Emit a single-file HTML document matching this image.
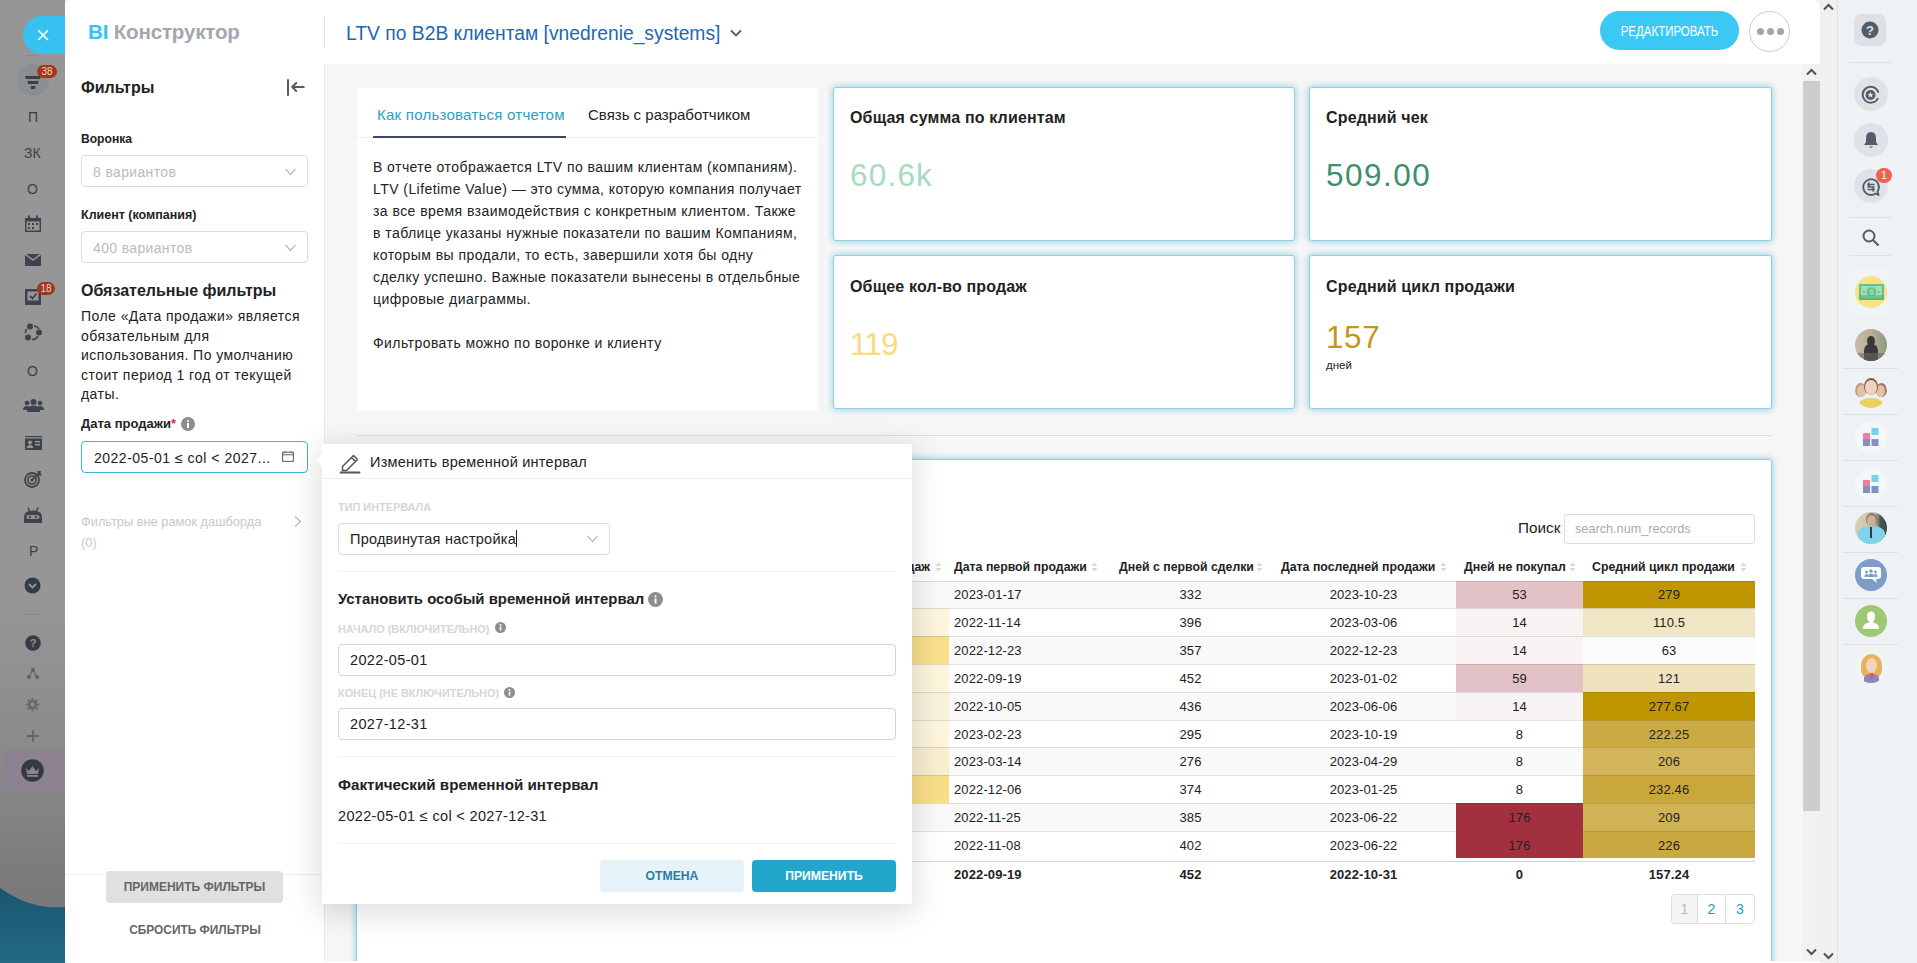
<!DOCTYPE html>
<html><head><meta charset="utf-8">
<style>
*{box-sizing:border-box;margin:0;padding:0}
html,body{width:1917px;height:963px;overflow:hidden}
body{position:relative;font-family:"Liberation Sans",sans-serif;background:#eef2f4;color:#222}
.a{position:absolute}
.t{position:absolute;white-space:nowrap;line-height:1}
</style></head><body>
<!-- LEFT SIDEBAR -->
<div class="a" id="lsb" style="left:0;top:0;width:65px;height:963px;background:linear-gradient(#969696 0px,#969696 600px,#8a8a8a 760px,#7b7b7b 880px,#777 963px);overflow:hidden">
  <div class="a" style="left:23px;top:16px;width:50px;height:38px;border-radius:19px 0 0 19px;background:#36c1f0"></div>
  <svg class="a" style="left:36px;top:28px" width="14" height="14" viewBox="0 0 14 14"><path d="M2.2 2.2L12 12M12 2.2L2.2 12" stroke="#fff" stroke-width="1.6"/></svg>
  <div class="a" style="left:25px;top:55px;width:14px;height:1px;background:#8a8a8a"></div>
  <div class="a" style="left:17px;top:64px;width:32px;height:32px;border-radius:50%;background:#8b8e92"></div>
  <svg class="a" style="left:24px;top:74px" width="18" height="16" viewBox="0 0 18 16"><path d="M1 2H17L16 5H2Z M3.3 7H14.7L13.7 10H4.3Z M6.6 12H11.4L10.9 15H7.1Z" fill="#3a4049"/></svg>
  <div class="a" style="left:37px;top:65px;width:20px;height:13px;border-radius:7px;background:#a5371a;color:#efd6cc;font-size:10px;line-height:13px;text-align:center">38</div>
  <div class="t" style="left:28px;top:110px;font-size:14px;color:#3b4048">П</div>
  <div class="t" style="left:24px;top:146px;font-size:14px;color:#3b4048">ЗК</div>
  <div class="t" style="left:27px;top:182px;font-size:14px;color:#3b4048">О</div>
  <svg class="a" style="left:24px;top:215px" width="18" height="17" viewBox="0 0 18 17"><path d="M1 3H17V17H1Z" fill="#3d434c"/><rect x="4" y="0.5" width="2" height="4" fill="#3d434c"/><rect x="12" y="0.5" width="2" height="4" fill="#3d434c"/><rect x="2.5" y="6.5" width="13" height="9" fill="#969696"/><g fill="#3d434c"><rect x="4" y="8" width="2" height="2"/><rect x="8" y="8" width="2" height="2"/><rect x="12" y="8" width="2" height="2"/><rect x="4" y="12" width="2" height="2"/><rect x="8" y="12" width="2" height="2"/></g></svg>
  <svg class="a" style="left:25px;top:254px" width="16" height="12" viewBox="0 0 16 12"><path d="M0 0H16V12H0Z" fill="#3d434c"/><path d="M0 0L8 6L16 0" stroke="#969696" stroke-width="1.5" fill="none"/></svg>
  <svg class="a" style="left:25px;top:288px" width="16" height="17" viewBox="0 0 16 17"><rect x="0" y="1" width="16" height="16" fill="#3d434c"/><rect x="2.5" y="3.5" width="11" height="9" fill="#969696"/><path d="M5 8L7.5 10.5L11.5 5.5" stroke="#3d434c" stroke-width="1.8" fill="none"/></svg>
  <div class="a" style="left:37px;top:282px;width:18px;height:13px;border-radius:7px;background:#9b3a18;color:#e8d0c8;font-size:10px;line-height:13px;text-align:center">18</div>
  <svg class="a" style="left:24px;top:323px" width="18" height="18" viewBox="0 0 18 18"><circle cx="6" cy="3.5" r="3" fill="#3d434c"/><circle cx="15" cy="9.5" r="3" fill="#3d434c"/><circle cx="4" cy="14.5" r="3" fill="#3d434c"/><path d="M10 3A7 7 0 0 1 15 6M14 13A7 7 0 0 1 8 16.5M1.5 10A7 7 0 0 1 2.5 6" stroke="#3d434c" stroke-width="1.6" fill="none"/></svg>
  <div class="t" style="left:27px;top:364px;font-size:14px;color:#3b4048">О</div>
  <svg class="a" style="left:23px;top:399px" width="21" height="13" viewBox="0 0 21 13"><g fill="#3d434c"><circle cx="10.5" cy="3" r="3"/><path d="M4 13Q4 6.5 10.5 6.5Q17 6.5 17 13Z"/><circle cx="4" cy="4" r="2.3"/><path d="M0 11Q0 7 4 7Q6 7 6.5 8L5 11Z"/><circle cx="17" cy="4" r="2.3"/><path d="M21 11Q21 7 17 7Q15 7 14.5 8L16 11Z"/></g></svg>
  <svg class="a" style="left:25px;top:436px" width="17" height="14" viewBox="0 0 17 14"><rect x="0" y="0" width="17" height="1.2" fill="#3d434c"/><rect x="0" y="2.5" width="17" height="11.5" fill="#3d434c"/><circle cx="5" cy="6.5" r="2" fill="#969696"/><path d="M2 12Q2 9 5 9Q8 9 8 12Z" fill="#969696"/><rect x="10" y="5" width="5" height="1.5" fill="#969696"/><rect x="10" y="8" width="5" height="1.5" fill="#969696"/></svg>
  <svg class="a" style="left:24px;top:471px" width="18" height="17" viewBox="0 0 18 17"><circle cx="8" cy="9" r="7" stroke="#3d434c" stroke-width="1.8" fill="none"/><circle cx="8" cy="9" r="4" stroke="#3d434c" stroke-width="1.6" fill="none"/><circle cx="8" cy="9" r="1.5" fill="#3d434c"/><path d="M8 9L15 2M13 1L16 0.5L15.5 4L17.5 3.5" stroke="#3d434c" stroke-width="1.6" fill="none"/></svg>
  <svg class="a" style="left:24px;top:507px" width="18" height="16" viewBox="0 0 18 16"><path d="M4 0.5L5.5 4M14 0.5L12.5 4" stroke="#3d434c" stroke-width="1.5"/><path d="M0 16V10Q0 3.5 9 3.5Q18 3.5 18 10V16Z" fill="#3d434c"/><rect x="2.5" y="8" width="13" height="4" rx="2" fill="#969696"/><circle cx="6" cy="10" r="1.2" fill="#3d434c"/><circle cx="12" cy="10" r="1.2" fill="#3d434c"/></svg>
  <div class="t" style="left:29px;top:544px;font-size:14px;color:#3b4048">Р</div>
  <svg class="a" style="left:24px;top:577px" width="17" height="17" viewBox="0 0 17 17"><circle cx="8.5" cy="8.5" r="8" fill="#353b45"/><path d="M5 7L8.5 10.5L12 7" stroke="#969696" stroke-width="1.8" fill="none"/></svg>
  <div class="a" style="left:23px;top:614px;width:19px;height:1px;background:#888"></div>
  <svg class="a" style="left:25px;top:635px" width="16" height="16" viewBox="0 0 16 16"><circle cx="8" cy="8" r="7.8" fill="#353b45"/><text x="8" y="12.3" font-size="11" font-weight="bold" text-anchor="middle" fill="#8f8f8f" font-family="Liberation Sans">?</text></svg>
  <svg class="a" style="left:27px;top:668px" width="12" height="11" viewBox="0 0 12 11"><g fill="#5d6269"><circle cx="6" cy="2" r="2"/><circle cx="2" cy="9" r="2"/><circle cx="10" cy="9" r="2"/></g><path d="M6 2L2 9M6 2L10 9" stroke="#5d6269" stroke-width="1.2"/></svg>
  <svg class="a" style="left:26px;top:698px" width="13" height="13" viewBox="0 0 13 13"><g fill="#686c72"><circle cx="6.5" cy="6.5" r="4.5"/><rect x="5.3" y="0" width="2.4" height="13"/><rect x="0" y="5.3" width="13" height="2.4"/><rect x="5.3" y="0" width="2.4" height="13" transform="rotate(45 6.5 6.5)"/><rect x="5.3" y="0" width="2.4" height="13" transform="rotate(-45 6.5 6.5)"/></g><circle cx="6.5" cy="6.5" r="2" fill="#8f8f8f"/></svg>
  <svg class="a" style="left:27px;top:730px" width="12" height="12" viewBox="0 0 12 12"><path d="M6 0V12M0 6H12" stroke="#606468" stroke-width="1.8"/></svg>
  <div class="a" style="left:3px;top:751px;width:62px;height:39px;background:#8c8290"></div>
  <svg class="a" style="left:21px;top:759px" width="23" height="23" viewBox="0 0 23 23"><circle cx="11.5" cy="11.5" r="11.3" fill="#343a44"/><path d="M5 9L8 12L11.5 7L15 12L18 9L17 15H6Z" fill="#8c8290"/><rect x="6" y="16" width="11" height="1.8" fill="#8c8290"/></svg>
  <svg class="a" style="left:0;top:860px" width="65" height="103" viewBox="0 0 65 103"><path d="M0 28Q20 42 40 46Q55 48 65 47V103H0Z" fill="url(#wg)"/><defs><linearGradient id="wg" x1="0" y1="0" x2="0" y2="1"><stop offset="0" stop-color="#1a5670"/><stop offset="1" stop-color="#236a85"/></linearGradient></defs></svg>
</div>
<!-- MAIN PANEL -->
<div class="a" id="main" style="left:65px;top:0;width:1755px;height:963px;background:#fff;border-radius:6px 6px 0 6px;overflow:hidden">
  <!-- header -->
  <div class="t" style="left:23px;top:22px;font-size:20.6px;font-weight:bold;letter-spacing:-0.2px"><span style="color:#2fc6f6">BI</span> <span style="color:#a3a8ae">Конструктор</span></div>
  <div class="a" style="left:259px;top:17px;width:1px;height:30px;background:#dfe3e7"></div>
  <div class="t" style="left:281px;top:24px;font-size:19.3px;color:#2067b0">LTV по B2B клиентам [vnedrenie_systems]</div>
  <svg class="a" style="left:665px;top:29px" width="12" height="9" viewBox="0 0 12 9"><path d="M1 1.5L6 6.5L11 1.5" stroke="#525c69" stroke-width="1.8" fill="none"/></svg>
  <div class="a" style="left:1535px;top:11px;width:139px;height:39px;border-radius:20px;background:#3bc8f5;color:#fff;font-size:14px;line-height:41px;text-align:center"><span style="display:inline-block;transform:scaleX(0.82)">РЕДАКТИРОВАТЬ</span></div>
  <div class="a" style="left:1684px;top:11px;width:41px;height:41px;border-radius:50%;border:1px solid #c6cbd2;background:#fff"></div>
  <div class="a" style="left:1692px;top:28px;width:7px;height:7px;border-radius:50%;background:#a1a6ad"></div>
  <div class="a" style="left:1702px;top:28px;width:7px;height:7px;border-radius:50%;background:#a1a6ad"></div>
  <div class="a" style="left:1712px;top:28px;width:7px;height:7px;border-radius:50%;background:#a1a6ad"></div>
  <!-- dashboard bg -->
  <div class="a" id="dash" style="left:260px;top:64px;width:1478px;height:897px;background:#f6f6f6;overflow:hidden">
<div class="a" style="left:32px;top:24px;width:461px;height:323px;background:#fff">
<div class="t" style="left:20px;top:19px;font-size:15px;letter-spacing:0.25px;color:#2aa0c6">Как пользоваться отчетом</div>
<div class="t" style="left:231px;top:19px;font-size:15px;color:#222">Связь с разработчиком</div>
<div class="a" style="left:0;top:49px;width:461px;height:1px;background:#eee"></div>
<div class="a" style="left:16px;top:48px;width:193px;height:2px;background:#3b4570"></div>
<div class="a" style="left:16px;top:68px;width:450px;font-size:14px;letter-spacing:0.44px;line-height:22px;color:#222">В отчете отображается LTV по вашим клиентам (компаниям).<br>LTV (Lifetime Value) — это сумма, которую компания получает<br>за все время взаимодействия с конкретным клиентом. Также<br>в таблице указаны нужные показатели по вашим Компаниям,<br>которым вы продали, то есть, завершили хотя бы одну<br>сделку успешно. Важные показатели вынесены в отдельбные<br>цифровые диаграммы.<br><br>Фильтровать можно по воронке и клиенту</div>
</div>
<div class="a" style="left:508px;top:23px;width:462px;height:154px;background:#fff;border:1px solid #8fd0e3;border-radius:3px;box-shadow:0 0 6px 1px rgba(100,190,222,0.6)">
<div class="t" style="left:16px;top:22px;font-size:16px;font-weight:bold;letter-spacing:0.15px;color:#222">Общая сумма по клиентам</div>
<div class="t" style="left:16px;top:72px;font-size:31.5px;letter-spacing:1.2px;color:#a6dbbf">60.6k</div>
</div>
<div class="a" style="left:984px;top:23px;width:463px;height:154px;background:#fff;border:1px solid #8fd0e3;border-radius:3px;box-shadow:0 0 6px 1px rgba(100,190,222,0.6)">
<div class="t" style="left:16px;top:22px;font-size:16px;font-weight:bold;letter-spacing:0.15px;color:#222">Средний чек</div>
<div class="t" style="left:16px;top:72px;font-size:31.5px;letter-spacing:1.5px;color:#3d8f6c">509.00</div>
</div>
<div class="a" style="left:508px;top:191px;width:462px;height:154px;background:#fff;border:1px solid #8fd0e3;border-radius:3px;box-shadow:0 0 6px 1px rgba(100,190,222,0.6)">
<div class="t" style="left:16px;top:23px;font-size:16px;font-weight:bold;letter-spacing:0.15px;color:#222">Общее кол-во продаж</div>
<div class="t" style="left:16px;top:73px;font-size:31.5px;letter-spacing:-0.9px;color:#fbd97c">119</div>
</div>
<div class="a" style="left:984px;top:191px;width:463px;height:154px;background:#fff;border:1px solid #8fd0e3;border-radius:3px;box-shadow:0 0 6px 1px rgba(100,190,222,0.6)">
<div class="t" style="left:16px;top:23px;font-size:16px;font-weight:bold;letter-spacing:0.15px;color:#222">Средний цикл продажи</div>
<div class="t" style="left:16px;top:66px;font-size:31.5px;letter-spacing:0.6px;color:#c09a16">157</div>
<div class="t" style="left:16px;top:104px;font-size:11.5px;color:#222">дней</div>
</div>
<div class="a" style="left:32px;top:371px;width:1414px;height:1px;background:#dcdcdc"></div>
<div class="a" style="left:31px;top:395px;width:1416px;height:520px;background:#fff;border:1px solid #8fd0e3;border-radius:3px;box-shadow:0 0 6px 1px rgba(100,190,222,0.6)"></div>
<div class="t" style="left:1193px;top:456px;font-size:15.3px;color:#222">Поиск</div>
<div class="a" style="left:1239px;top:450px;width:191px;height:30px;border:1px solid #ddd;border-radius:3px"></div>
<div class="t" style="left:1250px;top:459px;font-size:12.7px;color:#aaa">search.num_records</div>
<div class="t" style="left:505px;width:100px;text-align:right;top:497px;font-size:12.3px;font-weight:bold;color:#222">Кол-во продаж</div>
<svg class="a" style="left:610px;top:498px" width="7" height="10" viewBox="0 0 7 10"><path d="M0.5 4L3.5 0.5L6.5 4Z M0.5 6L3.5 9.5L6.5 6Z" fill="#d9d9d9"/></svg>
<div class="t" style="left:629px;top:497px;font-size:12.3px;font-weight:bold;color:#222">Дата первой продажи</div>
<svg class="a" style="left:766px;top:498px" width="7" height="10" viewBox="0 0 7 10"><path d="M0.5 4L3.5 0.5L6.5 4Z M0.5 6L3.5 9.5L6.5 6Z" fill="#d9d9d9"/></svg>
<div class="t" style="left:794px;top:497px;font-size:12.3px;font-weight:bold;color:#222">Дней с первой сделки</div>
<svg class="a" style="left:931px;top:498px" width="7" height="10" viewBox="0 0 7 10"><path d="M0.5 4L3.5 0.5L6.5 4Z M0.5 6L3.5 9.5L6.5 6Z" fill="#d9d9d9"/></svg>
<div class="t" style="left:956px;top:497px;font-size:12.3px;font-weight:bold;color:#222">Дата последней продажи</div>
<svg class="a" style="left:1115px;top:498px" width="7" height="10" viewBox="0 0 7 10"><path d="M0.5 4L3.5 0.5L6.5 4Z M0.5 6L3.5 9.5L6.5 6Z" fill="#d9d9d9"/></svg>
<div class="t" style="left:1139px;top:497px;font-size:12.3px;font-weight:bold;color:#222">Дней не покупал</div>
<svg class="a" style="left:1244px;top:498px" width="7" height="10" viewBox="0 0 7 10"><path d="M0.5 4L3.5 0.5L6.5 4Z M0.5 6L3.5 9.5L6.5 6Z" fill="#d9d9d9"/></svg>
<div class="t" style="left:1267px;top:497px;font-size:12.3px;font-weight:bold;color:#222">Средний цикл продажи</div>
<svg class="a" style="left:1415px;top:498px" width="7" height="10" viewBox="0 0 7 10"><path d="M0.5 4L3.5 0.5L6.5 4Z M0.5 6L3.5 9.5L6.5 6Z" fill="#d9d9d9"/></svg>
<div class="a" style="left:575px;top:517px;width:855px;height:27px;background:#f9f9f9"></div>
<div class="a" style="left:575px;top:517px;width:49px;height:27px;background:#f9f9f9"></div>
<div class="a" style="left:1131px;top:517px;width:127px;height:27px;background:#e3c3c8"></div>
<div class="a" style="left:1258px;top:517px;width:172px;height:27px;background:#bf9500"></div>
<div class="a" style="left:575px;top:517px;width:855px;height:1px;background:rgba(0,0,0,0.11)"></div>
<div class="t" style="left:629px;top:524px;font-size:13px;letter-spacing:0.12px;color:#222">2023-01-17</div>
<div class="t" style="left:805.5px;width:120px;text-align:center;top:524px;font-size:13px;letter-spacing:0.12px;color:#222">332</div>
<div class="t" style="left:978.5px;width:120px;text-align:center;top:524px;font-size:13px;letter-spacing:0.12px;color:#222">2023-10-23</div>
<div class="t" style="left:1134.5px;width:120px;text-align:center;top:524px;font-size:13px;letter-spacing:0.12px;color:#222">53</div>
<div class="t" style="left:1284px;width:120px;text-align:center;top:524px;font-size:13px;letter-spacing:0.12px;color:#222">279</div>
<div class="a" style="left:575px;top:544px;width:855px;height:28px;background:#fff"></div>
<div class="a" style="left:575px;top:544px;width:49px;height:28px;background:#fdf4dc"></div>
<div class="a" style="left:1131px;top:544px;width:127px;height:28px;background:#f8f3f3"></div>
<div class="a" style="left:1258px;top:544px;width:172px;height:28px;background:#f0e6c4"></div>
<div class="a" style="left:575px;top:544px;width:855px;height:1px;background:rgba(0,0,0,0.11)"></div>
<div class="t" style="left:629px;top:552px;font-size:13px;letter-spacing:0.12px;color:#222">2022-11-14</div>
<div class="t" style="left:805.5px;width:120px;text-align:center;top:552px;font-size:13px;letter-spacing:0.12px;color:#222">396</div>
<div class="t" style="left:978.5px;width:120px;text-align:center;top:552px;font-size:13px;letter-spacing:0.12px;color:#222">2023-03-06</div>
<div class="t" style="left:1134.5px;width:120px;text-align:center;top:552px;font-size:13px;letter-spacing:0.12px;color:#222">14</div>
<div class="t" style="left:1284px;width:120px;text-align:center;top:552px;font-size:13px;letter-spacing:0.12px;color:#222">110.5</div>
<div class="a" style="left:575px;top:572px;width:855px;height:28px;background:#f9f9f9"></div>
<div class="a" style="left:575px;top:572px;width:49px;height:28px;background:#f9df8c"></div>
<div class="a" style="left:1131px;top:572px;width:127px;height:28px;background:#f8f3f4"></div>
<div class="a" style="left:1258px;top:572px;width:172px;height:28px;background:#fcfcfc"></div>
<div class="a" style="left:575px;top:572px;width:855px;height:1px;background:rgba(0,0,0,0.11)"></div>
<div class="t" style="left:629px;top:580px;font-size:13px;letter-spacing:0.12px;color:#222">2022-12-23</div>
<div class="t" style="left:805.5px;width:120px;text-align:center;top:580px;font-size:13px;letter-spacing:0.12px;color:#222">357</div>
<div class="t" style="left:978.5px;width:120px;text-align:center;top:580px;font-size:13px;letter-spacing:0.12px;color:#222">2022-12-23</div>
<div class="t" style="left:1134.5px;width:120px;text-align:center;top:580px;font-size:13px;letter-spacing:0.12px;color:#222">14</div>
<div class="t" style="left:1284px;width:120px;text-align:center;top:580px;font-size:13px;letter-spacing:0.12px;color:#222">63</div>
<div class="a" style="left:575px;top:600px;width:855px;height:28px;background:#fff"></div>
<div class="a" style="left:575px;top:600px;width:49px;height:28px;background:#fdf4dc"></div>
<div class="a" style="left:1131px;top:600px;width:127px;height:28px;background:#e2c1c6"></div>
<div class="a" style="left:1258px;top:600px;width:172px;height:28px;background:#efe3bd"></div>
<div class="a" style="left:575px;top:600px;width:855px;height:1px;background:rgba(0,0,0,0.11)"></div>
<div class="t" style="left:629px;top:608px;font-size:13px;letter-spacing:0.12px;color:#222">2022-09-19</div>
<div class="t" style="left:805.5px;width:120px;text-align:center;top:608px;font-size:13px;letter-spacing:0.12px;color:#222">452</div>
<div class="t" style="left:978.5px;width:120px;text-align:center;top:608px;font-size:13px;letter-spacing:0.12px;color:#222">2023-01-02</div>
<div class="t" style="left:1134.5px;width:120px;text-align:center;top:608px;font-size:13px;letter-spacing:0.12px;color:#222">59</div>
<div class="t" style="left:1284px;width:120px;text-align:center;top:608px;font-size:13px;letter-spacing:0.12px;color:#222">121</div>
<div class="a" style="left:575px;top:628px;width:855px;height:28px;background:#f9f9f9"></div>
<div class="a" style="left:575px;top:628px;width:49px;height:28px;background:#f8f1dc"></div>
<div class="a" style="left:1131px;top:628px;width:127px;height:28px;background:#f8f3f4"></div>
<div class="a" style="left:1258px;top:628px;width:172px;height:28px;background:#bf9500"></div>
<div class="a" style="left:575px;top:628px;width:855px;height:1px;background:rgba(0,0,0,0.11)"></div>
<div class="t" style="left:629px;top:636px;font-size:13px;letter-spacing:0.12px;color:#222">2022-10-05</div>
<div class="t" style="left:805.5px;width:120px;text-align:center;top:636px;font-size:13px;letter-spacing:0.12px;color:#222">436</div>
<div class="t" style="left:978.5px;width:120px;text-align:center;top:636px;font-size:13px;letter-spacing:0.12px;color:#222">2023-06-06</div>
<div class="t" style="left:1134.5px;width:120px;text-align:center;top:636px;font-size:13px;letter-spacing:0.12px;color:#222">14</div>
<div class="t" style="left:1284px;width:120px;text-align:center;top:636px;font-size:13px;letter-spacing:0.12px;color:#222">277.67</div>
<div class="a" style="left:575px;top:656px;width:855px;height:27px;background:#fff"></div>
<div class="a" style="left:575px;top:656px;width:49px;height:27px;background:#fdf4dc"></div>
<div class="a" style="left:1131px;top:656px;width:127px;height:27px;background:#ffffff"></div>
<div class="a" style="left:1258px;top:656px;width:172px;height:27px;background:#cbaa43"></div>
<div class="a" style="left:575px;top:656px;width:855px;height:1px;background:rgba(0,0,0,0.11)"></div>
<div class="t" style="left:629px;top:664px;font-size:13px;letter-spacing:0.12px;color:#222">2023-02-23</div>
<div class="t" style="left:805.5px;width:120px;text-align:center;top:664px;font-size:13px;letter-spacing:0.12px;color:#222">295</div>
<div class="t" style="left:978.5px;width:120px;text-align:center;top:664px;font-size:13px;letter-spacing:0.12px;color:#222">2023-10-19</div>
<div class="t" style="left:1134.5px;width:120px;text-align:center;top:664px;font-size:13px;letter-spacing:0.12px;color:#222">8</div>
<div class="t" style="left:1284px;width:120px;text-align:center;top:664px;font-size:13px;letter-spacing:0.12px;color:#222">222.25</div>
<div class="a" style="left:575px;top:683px;width:855px;height:28px;background:#f9f9f9"></div>
<div class="a" style="left:575px;top:683px;width:49px;height:28px;background:#f8efcf"></div>
<div class="a" style="left:1131px;top:683px;width:127px;height:28px;background:#fafafa"></div>
<div class="a" style="left:1258px;top:683px;width:172px;height:28px;background:#d2b55a"></div>
<div class="a" style="left:575px;top:683px;width:855px;height:1px;background:rgba(0,0,0,0.11)"></div>
<div class="t" style="left:629px;top:691px;font-size:13px;letter-spacing:0.12px;color:#222">2023-03-14</div>
<div class="t" style="left:805.5px;width:120px;text-align:center;top:691px;font-size:13px;letter-spacing:0.12px;color:#222">276</div>
<div class="t" style="left:978.5px;width:120px;text-align:center;top:691px;font-size:13px;letter-spacing:0.12px;color:#222">2023-04-29</div>
<div class="t" style="left:1134.5px;width:120px;text-align:center;top:691px;font-size:13px;letter-spacing:0.12px;color:#222">8</div>
<div class="t" style="left:1284px;width:120px;text-align:center;top:691px;font-size:13px;letter-spacing:0.12px;color:#222">206</div>
<div class="a" style="left:575px;top:711px;width:855px;height:28px;background:#fff"></div>
<div class="a" style="left:575px;top:711px;width:49px;height:28px;background:#f9de8a"></div>
<div class="a" style="left:1131px;top:711px;width:127px;height:28px;background:#ffffff"></div>
<div class="a" style="left:1258px;top:711px;width:172px;height:28px;background:#c9a73d"></div>
<div class="a" style="left:575px;top:711px;width:855px;height:1px;background:rgba(0,0,0,0.11)"></div>
<div class="t" style="left:629px;top:719px;font-size:13px;letter-spacing:0.12px;color:#222">2022-12-06</div>
<div class="t" style="left:805.5px;width:120px;text-align:center;top:719px;font-size:13px;letter-spacing:0.12px;color:#222">374</div>
<div class="t" style="left:978.5px;width:120px;text-align:center;top:719px;font-size:13px;letter-spacing:0.12px;color:#222">2023-01-25</div>
<div class="t" style="left:1134.5px;width:120px;text-align:center;top:719px;font-size:13px;letter-spacing:0.12px;color:#222">8</div>
<div class="t" style="left:1284px;width:120px;text-align:center;top:719px;font-size:13px;letter-spacing:0.12px;color:#222">232.46</div>
<div class="a" style="left:575px;top:739px;width:855px;height:28px;background:#f9f9f9"></div>
<div class="a" style="left:575px;top:739px;width:49px;height:28px;background:#f9f9f9"></div>
<div class="a" style="left:1131px;top:739px;width:127px;height:28px;background:#a2303e"></div>
<div class="a" style="left:1258px;top:739px;width:172px;height:28px;background:#d0b354"></div>
<div class="a" style="left:575px;top:739px;width:855px;height:1px;background:rgba(0,0,0,0.11)"></div>
<div class="t" style="left:629px;top:747px;font-size:13px;letter-spacing:0.12px;color:#222">2022-11-25</div>
<div class="t" style="left:805.5px;width:120px;text-align:center;top:747px;font-size:13px;letter-spacing:0.12px;color:#222">385</div>
<div class="t" style="left:978.5px;width:120px;text-align:center;top:747px;font-size:13px;letter-spacing:0.12px;color:#222">2023-06-22</div>
<div class="t" style="left:1134.5px;width:120px;text-align:center;top:747px;font-size:13px;letter-spacing:0.12px;color:#222">176</div>
<div class="t" style="left:1284px;width:120px;text-align:center;top:747px;font-size:13px;letter-spacing:0.12px;color:#222">209</div>
<div class="a" style="left:575px;top:767px;width:855px;height:27px;background:#fff"></div>
<div class="a" style="left:575px;top:767px;width:49px;height:27px;background:#ffffff"></div>
<div class="a" style="left:1131px;top:767px;width:127px;height:27px;background:#a2303e"></div>
<div class="a" style="left:1258px;top:767px;width:172px;height:27px;background:#caa940"></div>
<div class="a" style="left:575px;top:767px;width:556px;height:1px;background:rgba(0,0,0,0.11)"></div>
<div class="a" style="left:1258px;top:767px;width:172px;height:1px;background:rgba(0,0,0,0.11)"></div>
<div class="t" style="left:629px;top:775px;font-size:13px;letter-spacing:0.12px;color:#222">2022-11-08</div>
<div class="t" style="left:805.5px;width:120px;text-align:center;top:775px;font-size:13px;letter-spacing:0.12px;color:#222">402</div>
<div class="t" style="left:978.5px;width:120px;text-align:center;top:775px;font-size:13px;letter-spacing:0.12px;color:#222">2023-06-22</div>
<div class="t" style="left:1134.5px;width:120px;text-align:center;top:775px;font-size:13px;letter-spacing:0.12px;color:#222">176</div>
<div class="t" style="left:1284px;width:120px;text-align:center;top:775px;font-size:13px;letter-spacing:0.12px;color:#222">226</div>
<div class="a" style="left:575px;top:797px;width:855px;height:1px;background:#d8d8d8"></div>
<div class="t" style="left:629px;top:804px;font-size:13px;letter-spacing:0.12px;font-weight:bold;color:#222">2022-09-19</div>
<div class="t" style="left:805.5px;width:120px;text-align:center;top:804px;font-size:13px;letter-spacing:0.12px;font-weight:bold;color:#222">452</div>
<div class="t" style="left:978.5px;width:120px;text-align:center;top:804px;font-size:13px;letter-spacing:0.12px;font-weight:bold;color:#222">2022-10-31</div>
<div class="t" style="left:1134.5px;width:120px;text-align:center;top:804px;font-size:13px;letter-spacing:0.12px;font-weight:bold;color:#222">0</div>
<div class="t" style="left:1284px;width:120px;text-align:center;top:804px;font-size:13px;letter-spacing:0.12px;font-weight:bold;color:#222">157.24</div>
<div class="a" style="left:1346px;top:830px;width:84px;height:30px;border:1px solid #ddd;border-radius:4px;overflow:hidden;display:flex"><div style="width:26px;height:28px;background:#f5f5f5;border-right:1px solid #ddd;color:#bbb;font-size:14px;line-height:28px;text-align:center">1</div><div style="width:28px;height:28px;border-right:1px solid #ddd;color:#1a9dc9;font-size:14px;line-height:28px;text-align:center">2</div><div style="width:28px;height:28px;color:#1a9dc9;font-size:14px;line-height:28px;text-align:center">3</div></div>
</div>
  <!-- filter panel -->
  <div class="a" id="filt" style="left:0;top:64px;width:260px;height:897px;background:#fff;border-right:1px solid #e8e8e8">
    <div class="t" style="left:16px;top:16px;font-size:16px;font-weight:bold;color:#222">Фильтры</div>
    <svg class="a" style="left:221px;top:15px" width="20" height="17" viewBox="0 0 20 17"><path d="M2 1V16" stroke="#5b5b5b" stroke-width="2" stroke-linecap="round"/><path d="M17.8 8H6.2M10.2 4L6.2 8L10.2 12" stroke="#5b5b5b" stroke-width="2" fill="none" stroke-linecap="round" stroke-linejoin="round"/></svg>
    <div class="t" style="left:16px;top:69px;font-size:12.1px;font-weight:bold;color:#222">Воронка</div>
    <div class="a" style="left:16px;top:91px;width:227px;height:32px;border:1px solid #ddd;border-radius:4px"></div>
    <div class="t" style="left:28px;top:101px;font-size:14px;letter-spacing:0.35px;color:#bbb">8 вариантов</div>
    <svg class="a" style="left:220px;top:104px" width="11" height="8" viewBox="0 0 11 8"><path d="M0.5 1L5.5 6.5L10.5 1" stroke="#bbb" stroke-width="1.2" fill="none"/></svg>
    <div class="t" style="left:16px;top:145px;font-size:12.5px;font-weight:bold;color:#222">Клиент (компания)</div>
    <div class="a" style="left:16px;top:167px;width:227px;height:32px;border:1px solid #ddd;border-radius:4px"></div>
    <div class="t" style="left:28px;top:177px;font-size:14px;letter-spacing:0.35px;color:#bbb">400 вариантов</div>
    <svg class="a" style="left:220px;top:180px" width="11" height="8" viewBox="0 0 11 8"><path d="M0.5 1L5.5 6.5L10.5 1" stroke="#bbb" stroke-width="1.2" fill="none"/></svg>
    <div class="t" style="left:16px;top:219px;font-size:16px;font-weight:bold;color:#222">Обязательные фильтры</div>
    <div class="a" style="left:16px;top:243px;width:250px;font-size:14px;letter-spacing:0.45px;line-height:19.5px;color:#222">Поле «Дата продажи» является<br>обязательным для<br>использования. По умолчанию<br>стоит период 1 год от текущей<br>даты.</div>
    <div class="t" style="left:16px;top:353px;font-size:13px;font-weight:bold;color:#222">Дата продажи<span style="color:#e0245e">*</span></div>
    <svg class="a" style="left:116px;top:353px" width="14" height="14" viewBox="0 0 14 14"><circle cx="7" cy="7" r="7" fill="#8d8d8d"/><rect x="6" y="6" width="2" height="5" fill="#fff"/><circle cx="7" cy="4" r="1.1" fill="#fff"/></svg>
    <div class="a" style="left:16px;top:377px;width:227px;height:32px;border:1px solid #3fb6d7;border-radius:4px"></div>
    <div class="t" style="left:29px;top:387px;font-size:14px;letter-spacing:0.5px;color:#222">2022-05-01 ≤ col &lt; 2027...</div>
    <svg class="a" style="left:217px;top:387px" width="12" height="11" viewBox="0 0 12 11"><rect x="0.6" y="1.2" width="10.8" height="9.2" stroke="#666" stroke-width="1.1" fill="none"/><path d="M0.6 3.8H11.4M3 0V2.2M9 0V2.2" stroke="#666" stroke-width="1.1"/></svg>
    <div class="t" style="left:16px;top:452px;font-size:12.8px;color:#c8c8c8">Фильтры вне рамок дашборда</div>
    <div class="t" style="left:16px;top:473px;font-size:12.8px;color:#c8c8c8">(0)</div>
    <svg class="a" style="left:229px;top:452px" width="8" height="11" viewBox="0 0 8 11"><path d="M1 0.5L6.5 5.5L1 10.5" stroke="#bbb" stroke-width="1.2" fill="none"/></svg>
    <div class="a" style="left:0;top:810px;width:260px;height:1px;background:#eee"></div>
    <div class="a" style="left:41px;top:807px;width:177px;height:32px;border-radius:4px;background:#e0e0e0;color:#666;font-size:12px;font-weight:bold;line-height:32px;text-align:center">ПРИМЕНИТЬ ФИЛЬТРЫ</div>
    <div class="t" style="left:0;width:260px;text-align:center;top:861px;font-size:11.9px;font-weight:bold;color:#666">СБРОСИТЬ ФИЛЬТРЫ</div>
  </div>
</div>
<!-- scrollbars -->
<div class="a" style="left:1803px;top:64px;width:17px;height:897px;background:#f1f1f1"></div>
<div class="a" style="left:1803px;top:81px;width:17px;height:730px;background:#cdcdcd"></div>
<svg class="a" style="left:1806px;top:68px" width="11" height="8" viewBox="0 0 11 8"><path d="M1 6.5L5.5 2L10 6.5" stroke="#505050" stroke-width="2" fill="none"/></svg>
<svg class="a" style="left:1806px;top:948px" width="11" height="8" viewBox="0 0 11 8"><path d="M1 1.5L5.5 6L10 1.5" stroke="#505050" stroke-width="2" fill="none"/></svg>
<div class="a" style="left:1820px;top:0;width:18px;height:963px;background:#f0f0f0;border-right:1px solid #dde3e8"></div>
<svg class="a" style="left:1823px;top:3px" width="11" height="8" viewBox="0 0 11 8"><path d="M1 6.5L5.5 2L10 6.5" stroke="#505050" stroke-width="2" fill="none"/></svg>
<svg class="a" style="left:1823px;top:952px" width="11" height="8" viewBox="0 0 11 8"><path d="M1 1.5L5.5 6L10 1.5" stroke="#505050" stroke-width="2" fill="none"/></svg>
<!-- RIGHT SIDEBAR -->
<div class="a" id="rsb" style="left:1838px;top:0;width:79px;height:963px;background:#eef2f4">
  <div class="a" style="left:16px;top:14px;width:32px;height:32px;border-radius:7px;background:#dde1e5"></div>
  <svg class="a" style="left:23px;top:21px" width="18" height="18" viewBox="0 0 18 18"><circle cx="9" cy="9" r="8.5" fill="#535c69"/><text x="9" y="14" font-size="13" font-weight="bold" text-anchor="middle" fill="#dde1e5" font-family="Liberation Sans">?</text></svg>
  <div class="a" style="left:11px;top:62px;width:42px;height:1px;background:#dde2e6"></div>
  <div class="a" style="left:16px;top:77px;width:34px;height:34px;border-radius:50%;background:#dfe3e7"></div>
  <svg class="a" style="left:23px;top:85px" width="20" height="20" viewBox="0 0 20 20"><path d="M17.2 7A8 8 0 1 0 16.6 13.8" stroke="#535c69" stroke-width="1.9" fill="none" stroke-linecap="round"/><circle cx="9.5" cy="10" r="5" fill="#535c69"/><path d="M9.5 6.8L10.4 8.9L12.6 9L10.9 10.4L11.5 12.6L9.5 11.4L7.5 12.6L8.1 10.4L6.4 9L8.6 8.9Z" fill="#dfe3e7"/><path d="M13.5 12.5L14.2 13.6L15.5 13.8L14.5 14.6L14.8 15.9L13.5 15.2" fill="#dfe3e7"/></svg>
  <div class="a" style="left:16px;top:123px;width:34px;height:34px;border-radius:50%;background:#dfe3e7"></div>
  <svg class="a" style="left:25px;top:131px" width="16" height="18" viewBox="0 0 16 18"><path d="M8 1Q13 1 13 7V11L15 14H1L3 11V7Q3 1 8 1Z" fill="#535c69"/><path d="M6 15.5Q8 18 10 15.5Z" fill="#535c69"/></svg>
  <div class="a" style="left:16px;top:169px;width:34px;height:34px;border-radius:50%;background:#dfe3e7"></div>
  <svg class="a" style="left:23px;top:177px" width="20" height="20" viewBox="0 0 20 20"><path d="M16.5 14.5A7.8 7.8 0 1 0 14.5 16.5L17.5 18Z" stroke="#535c69" stroke-width="1.9" fill="none" stroke-linejoin="round"/><path d="M6.5 7.5H13.5M6.5 7.5L8.5 5.5M6.5 7.5L8.5 9.5M6.5 10H13.5M6.5 12.5H13.5M13.5 12.5L11.5 10.5M13.5 12.5L11.5 14.5" stroke="#535c69" stroke-width="1.4" fill="none"/></svg>
  <div class="a" style="left:38px;top:168px;width:16px;height:15px;border-radius:8px;background:#f0614e;color:#fff;font-size:11px;line-height:15px;text-align:center">1</div>
  <div class="a" style="left:11px;top:217px;width:42px;height:1px;background:#dde2e6"></div>
  <svg class="a" style="left:24px;top:229px" width="18" height="18" viewBox="0 0 18 18"><circle cx="7" cy="7" r="5.5" stroke="#535c69" stroke-width="2" fill="none"/><path d="M11 11L16.5 16.5" stroke="#535c69" stroke-width="2.2"/></svg>
  <div class="a" style="left:11px;top:255px;width:42px;height:1px;background:#dde2e6"></div>
  <div class="a" style="left:10px;top:268px;width:46px;height:47px;border-radius:8px;background:#f1f4f6"></div>
  <div class="a" style="left:17px;top:276px;width:32px;height:32px;border-radius:50%;background:#f7e384"></div>
  <svg class="a" style="left:21px;top:284px" width="25" height="16" viewBox="0 0 25 16"><rect x="0" y="0" width="25" height="16" rx="1" fill="#62c28b"/><rect x="2" y="2" width="21" height="12" fill="#a3dcb6"/><circle cx="12.5" cy="8" r="4.8" fill="#62c28b"/><text x="12.5" y="11.2" font-size="8.5" font-weight="bold" text-anchor="middle" fill="#a3dcb6" font-family="Liberation Sans">$</text><circle cx="5" cy="8" r="1" fill="#62c28b"/><circle cx="20" cy="8" r="1" fill="#62c28b"/><rect x="0" y="11" width="25" height="5" fill="#52b27b" opacity="0.6"/></svg>
  <div class="a" style="left:17px;top:329px;width:32px;height:32px;border-radius:50%;overflow:hidden;background:linear-gradient(90deg,#c8bca9 0%,#b9ad9a 50%,#8e9a80 100%)">
    <div class="a" style="left:12px;top:7px;width:8px;height:10px;border-radius:50%;background:#3e3630"></div>
    <div class="a" style="left:9px;top:15px;width:14px;height:17px;border-radius:40% 40% 0 0;background:#3a3a3e"></div>
    <div class="a" style="left:0px;top:24px;width:32px;height:8px;background:#6f6a62;opacity:0.6"></div>
  </div>
  <div class="a" style="left:5px;top:368px;width:55px;height:1px;background:#dde2e6"></div>
  <div class="a" style="left:17px;top:376px;width:32px;height:32px;border-radius:50%;background:#eef0f2;overflow:hidden">
    <div class="a" style="left:2px;top:9px;width:9px;height:12px;border-radius:50%;background:#e0c2a8;box-shadow:-1px -1px 0 1px #b99b7e"></div>
    <div class="a" style="left:21px;top:9px;width:9px;height:12px;border-radius:50%;background:#e0c2a8;box-shadow:1px -1px 0 1px #9c7a60"></div>
    <div class="a" style="left:10px;top:4px;width:12px;height:15px;border-radius:50%;background:#efd3bf;box-shadow:0 -1px 0 1px #7b5e4c"></div>
    <div class="a" style="left:4px;top:22px;width:24px;height:12px;border-radius:50% 50% 0 0;background:#ebd05c"></div>
  </div>
  <div class="a" style="left:5px;top:414px;width:55px;height:1px;background:#dde2e6"></div>
  <div class="a" style="left:17px;top:421px;width:32px;height:32px;border-radius:50%;background:#f4f6f8"></div>
  <svg class="a" style="left:25px;top:428px" width="16" height="18" viewBox="0 0 16 18"><rect x="8.5" y="0" width="7" height="7" fill="#6fd6f2"/><rect x="0" y="5" width="7" height="6" fill="#eb7fa6"/><rect x="0" y="11" width="7" height="7" fill="#8391c2"/><rect x="8.5" y="11" width="7" height="7" fill="#8391c2"/></svg>
  <div class="a" style="left:5px;top:460px;width:55px;height:1px;background:#dde2e6"></div>
  <div class="a" style="left:17px;top:468px;width:32px;height:32px;border-radius:50%;background:#f4f6f8"></div>
  <svg class="a" style="left:25px;top:475px" width="16" height="18" viewBox="0 0 16 18"><rect x="8.5" y="0" width="7" height="7" fill="#6fd6f2"/><rect x="0" y="5" width="7" height="6" fill="#eb7fa6"/><rect x="0" y="11" width="7" height="7" fill="#8391c2"/><rect x="8.5" y="11" width="7" height="7" fill="#8391c2"/></svg>
  <div class="a" style="left:5px;top:506px;width:55px;height:1px;background:#dde2e6"></div>
  <div class="a" style="left:17px;top:512px;width:32px;height:32px;border-radius:50%;overflow:hidden;background:linear-gradient(90deg,#d9cdb5 0%,#cfc3ab 60%,#4c5450 80%,#3e4642 100%)">
    <div class="a" style="left:12px;top:3px;width:9px;height:11px;border-radius:50%;background:#cfae98;box-shadow:0 -1px 0 1px #7f7570"></div>
    <div class="a" style="left:3px;top:14px;width:27px;height:18px;border-radius:45% 45% 0 0;background:#7fd3ea"></div>
    <div class="a" style="left:15px;top:15px;width:2px;height:11px;background:#333c44"></div>
  </div>
  <div class="a" style="left:5px;top:552px;width:55px;height:1px;background:#dde2e6"></div>
  <div class="a" style="left:17px;top:559px;width:32px;height:32px;border-radius:50%;background:#7b9dc7"></div>
  <svg class="a" style="left:22px;top:565px" width="22" height="20" viewBox="0 0 22 20"><path d="M4 2H18Q21 2 21 5V11Q21 14 18 14H16L17 18L12 14H4Q1 14 1 11V5Q1 2 4 2Z" fill="#fff"/><g fill="#7b9dc7"><circle cx="11" cy="6" r="1.8"/><path d="M8 12Q8 8.5 11 8.5Q14 8.5 14 12Z"/><circle cx="6.5" cy="7" r="1.4"/><path d="M4.5 12Q4.5 9 6.5 9Q7.8 9 8.3 10L7.5 12Z"/><circle cx="15.5" cy="7" r="1.4"/><path d="M17.5 12Q17.5 9 15.5 9Q14.2 9 13.7 10L14.5 12Z"/></g></svg>
  <div class="a" style="left:5px;top:598px;width:55px;height:1px;background:#dde2e6"></div>
  <div class="a" style="left:17px;top:605px;width:32px;height:32px;border-radius:50%;background:#9dc972"></div>
  <svg class="a" style="left:24px;top:610px" width="18" height="21" viewBox="0 0 18 21"><path d="M9 1.5Q13 1.5 13 6.5Q13 10 11 11.5V12.5Q17 13.5 17 18V19H1V18Q1 13.5 7 12.5V11.5Q5 10 5 6.5Q5 1.5 9 1.5Z" fill="#fff"/></svg>
  <div class="a" style="left:5px;top:644px;width:55px;height:1px;background:#dde2e6"></div>
  <div class="a" style="left:17px;top:651px;width:32px;height:32px;border-radius:50%;background:#f3f4f6;overflow:hidden">
    <div class="a" style="left:6px;top:3px;width:21px;height:24px;border-radius:50% 50% 35% 35%;background:#e3b45c"></div>
    <div class="a" style="left:11px;top:7px;width:11px;height:15px;border-radius:50%;background:#f4d4c0"></div>
    <div class="a" style="left:9px;top:23px;width:15px;height:10px;border-radius:40% 40% 0 0;background:#8c86b8"></div>
    <div class="a" style="left:15px;top:22px;width:3px;height:5px;background:#d95a5a"></div>
  </div>
</div>
<!-- POPOVER -->
<div class="a" style="left:322px;top:444px;width:590px;height:460px;background:#fff;border-radius:3px;box-shadow:0 6px 30px 4px rgba(0,0,0,0.13)">
  <svg class="a" style="left:-7px;top:7px" width="9" height="18" viewBox="0 0 9 18"><path d="M9 0L1 9L9 18Z" fill="#fff"/></svg>
  <svg class="a" style="left:17px;top:7px" width="22" height="23" viewBox="0 0 22 23"><path d="M3.5 15.5V19.5H7.5L18.5 8.5L14.5 4.5Z M12.5 6.5L16.5 10.5" stroke="#555" stroke-width="1.5" fill="none" stroke-linejoin="round"/><path d="M1.5 21.5H20.5" stroke="#555" stroke-width="2" stroke-linecap="round"/></svg>
  <div class="t" style="left:48px;top:11px;font-size:14.5px;letter-spacing:0.25px;color:#222">Изменить временной интервал</div>
  <div class="a" style="left:0;top:34px;width:590px;height:1px;background:#eee"></div>
  <div class="t" style="left:16px;top:58px;font-size:10.9px;font-weight:bold;color:#d6d6d6">ТИП ИНТЕРВАЛА</div>
  <div class="a" style="left:16px;top:79px;width:272px;height:32px;border:1px solid #ddd;border-radius:4px"></div>
  <div class="t" style="left:28px;top:86px;font-size:14.5px;letter-spacing:0.23px;color:#222">Продвинутая настройка<span style="display:inline-block;width:1px;height:17px;background:#222;vertical-align:-3px"></span></div>
  <svg class="a" style="left:265px;top:91px" width="11" height="8" viewBox="0 0 11 8"><path d="M0.5 1L5.5 6.5L10.5 1" stroke="#bbb" stroke-width="1.2" fill="none"/></svg>
  <div class="a" style="left:16px;top:127px;width:558px;height:1px;background:#eee"></div>
  <div class="t" style="left:16px;top:148px;font-size:14.9px;font-weight:bold;color:#222">Установить особый временной интервал</div>
  <svg class="a" style="left:326px;top:148px" width="15" height="15" viewBox="0 0 15 15"><circle cx="7.5" cy="7.5" r="7.5" fill="#8d8d8d"/><rect x="6.5" y="6.5" width="2" height="5" fill="#fff"/><circle cx="7.5" cy="4.3" r="1.1" fill="#fff"/></svg>
  <div class="t" style="left:16px;top:180px;font-size:10.9px;font-weight:bold;color:#d6d6d6">НАЧАЛО (ВКЛЮЧИТЕЛЬНО)</div>
  <svg class="a" style="left:173px;top:178px" width="11" height="11" viewBox="0 0 11 11"><circle cx="5.5" cy="5.5" r="5.5" fill="#8d8d8d"/><rect x="4.7" y="4.6" width="1.6" height="4" fill="#fff"/><circle cx="5.5" cy="3" r="0.9" fill="#fff"/></svg>
  <div class="a" style="left:16px;top:200px;width:558px;height:32px;border:1px solid #d3d3dd;border-radius:4px"></div>
  <div class="t" style="left:28px;top:209px;font-size:14.5px;letter-spacing:0.35px;color:#222">2022-05-01</div>
  <div class="t" style="left:16px;top:244px;font-size:10.9px;font-weight:bold;color:#d6d6d6">КОНЕЦ (НЕ ВКЛЮЧИТЕЛЬНО)</div>
  <svg class="a" style="left:182px;top:243px" width="11" height="11" viewBox="0 0 11 11"><circle cx="5.5" cy="5.5" r="5.5" fill="#8d8d8d"/><rect x="4.7" y="4.6" width="1.6" height="4" fill="#fff"/><circle cx="5.5" cy="3" r="0.9" fill="#fff"/></svg>
  <div class="a" style="left:16px;top:264px;width:558px;height:32px;border:1px solid #d3d3dd;border-radius:4px"></div>
  <div class="t" style="left:28px;top:273px;font-size:14.5px;letter-spacing:0.35px;color:#222">2027-12-31</div>
  <div class="a" style="left:16px;top:312px;width:558px;height:1px;background:#eee"></div>
  <div class="t" style="left:16px;top:333px;font-size:15.2px;font-weight:bold;color:#222">Фактический временной интервал</div>
  <div class="t" style="left:16px;top:365px;font-size:14.5px;letter-spacing:0.33px;color:#222">2022-05-01 ≤ col &lt; 2027-12-31</div>
  <div class="a" style="left:16px;top:399px;width:558px;height:1px;background:#eee"></div>
  <div class="a" style="left:278px;top:416px;width:144px;height:32px;border-radius:4px;background:#e6f4f9;color:#2a7e9d;font-size:12.2px;font-weight:bold;line-height:32px;text-align:center">ОТМЕНА</div>
  <div class="a" style="left:430px;top:416px;width:144px;height:32px;border-radius:4px;background:#22a6cb;color:#fff;font-size:12.2px;font-weight:bold;line-height:32px;text-align:center">ПРИМЕНИТЬ</div>
</div>
</body></html>
